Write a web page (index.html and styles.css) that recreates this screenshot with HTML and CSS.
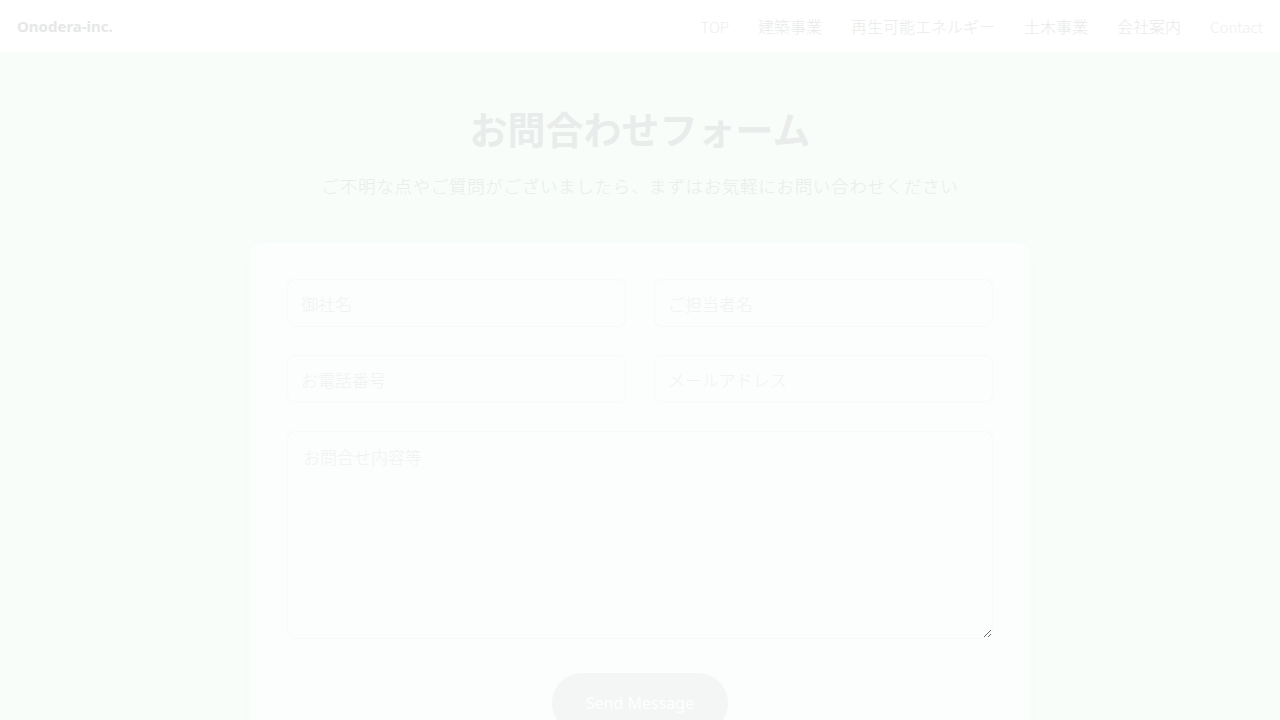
FILE: index.html
```html
<!DOCTYPE html>
<html lang="ja">
<head>
<meta charset="utf-8">
<title>お問合わせフォーム | Onodera-inc.</title>
<link rel="stylesheet" href="styles.css">
</head>
<body>
<header class="site-header">
  <a class="logo" href="#">Onodera-inc.</a>
  <nav class="nav">
    <a class="nav-link latin" href="#">TOP</a>
    <a class="nav-link" href="#">建築事業</a>
    <a class="nav-link" href="#">再生可能エネルギー</a>
    <a class="nav-link" href="#">土木事業</a>
    <a class="nav-link" href="#">会社案内</a>
    <a class="nav-link latin" href="#">Contact</a>
  </nav>
</header>
<main class="contact">
  <h1 class="contact-title">お問合わせフォーム</h1>
  <p class="contact-lead">ご不明な点やご質問がございましたら、まずはお気軽にお問い合わせください</p>
  <form class="contact-card">
    <div class="field-grid">
      <input class="field" type="text" placeholder="御社名">
      <input class="field" type="text" placeholder="ご担当者名">
      <input class="field" type="tel" placeholder="お電話番号">
      <input class="field" type="email" placeholder="メールアドレス">
    </div>
    <textarea class="field field-area" placeholder="お問合せ内容等"></textarea>
    <div class="actions">
      <button class="send" type="button">Send Message</button>
    </div>
  </form>
</main>
</body>
</html>
```
FILE: styles.css
```css
* { box-sizing: border-box; }
html, body { margin: 0; padding: 0; }
body {
  background: #f8fdfa;
  font-family: "Noto Sans CJK JP", "Noto Sans", sans-serif;
  color: #e8eae9;
  overflow: hidden;
}
.site-header {
  height: 52px;
  background: #ffffff;
  display: flex;
  align-items: center;
  justify-content: space-between;
  padding: 0 17px 0 17px;
}
.logo {
  font-family: "Noto Sans", sans-serif;
  font-weight: 700;
  font-size: 15px;
  color: #e6e7e7;
  text-decoration: none;
}
.nav {
  display: flex;
  align-items: baseline;
  gap: 29px;
}
.nav-link {
  font-size: 16px;
  color: #e9ebea;
  text-decoration: none;
  font-weight: 300;
}
.nav-link.latin {
  font-size: 15px;
  font-weight: 300;
  color: #eeefef;
}
.contact {
  display: flex;
  flex-direction: column;
  align-items: center;
  padding-top: 49px;
}
.contact-title {
  margin: 0;
  font-size: 38px;
  line-height: 53px;
  font-weight: 700;
  color: #eaeceb;
}
.contact-lead {
  margin: 18px 0 0;
  font-size: 17.6px;
  line-height: 28px;
  font-weight: 300;
  letter-spacing: 0.6px;
  color: #e9ecea;
}
.contact-card {
  margin-top: 43px;
  width: 780px;
  background: #fcfefd;
  border-radius: 12px;
  box-shadow: 0 1px 8px rgba(220, 230, 224, 0.06);
  padding: 36px 37px 40px;
}
.field-grid {
  display: grid;
  grid-template-columns: 1fr 1fr;
  column-gap: 28px;
  row-gap: 28px;
}
.field {
  display: block;
  width: 100%;
  height: 48px;
  border: 1px solid #f8faf9;
  border-radius: 8px;
  background: #fcfefd;
  padding: 0 13px;
  font-family: "Noto Sans CJK JP", "Noto Sans", sans-serif;
  font-size: 17px;
  font-weight: 300;
  color: #eceeed;
  outline: none;
}
.field::placeholder { color: #f0f2f1; }
.field-area {
  margin-top: 28px;
  height: 208px;
  padding: 12px 15px;
  resize: vertical;
}
.actions {
  display: flex;
  justify-content: center;
  margin-top: 34px;
}
.send {
  width: 176px;
  height: 60px;
  border: none;
  border-radius: 30px;
  background: #f3f6f4;
  color: #ffffff;
  font-family: "Noto Sans", "Noto Sans CJK JP", sans-serif;
  font-size: 16px;
}
```
